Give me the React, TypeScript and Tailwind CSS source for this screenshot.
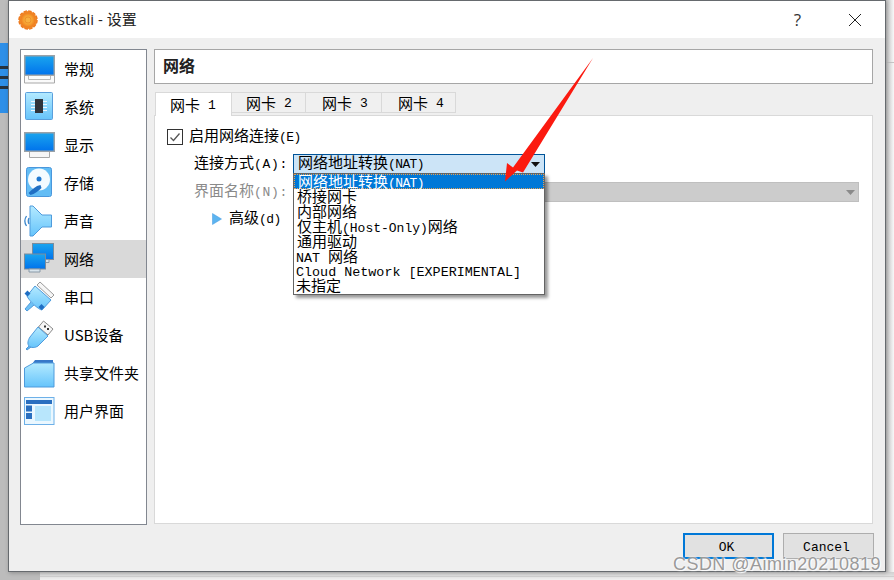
import React from "react";

const cjk = "font-['Liberation_Mono','Noto_Sans_CJK_SC',monospace]";

function Defs() {
  return (
    <svg width="0" height="0" className="absolute">
      <defs>
        <linearGradient id="blu" x1="0" y1="0" x2="0" y2="1">
          <stop offset="0" stopColor="#1aa5ee" />
          <stop offset="1" stopColor="#0072ec" />
        </linearGradient>
        <linearGradient id="lb" x1="0" y1="0" x2="0" y2="1">
          <stop offset="0" stopColor="#b4eaff" />
          <stop offset="1" stopColor="#66c4fb" />
        </linearGradient>
        <radialGradient id="flw">
          <stop offset="0" stopColor="#f9c94c" />
          <stop offset="0.6" stopColor="#f5a030" />
          <stop offset="1" stopColor="#ee7a1e" />
        </radialGradient>
      </defs>
    </svg>
  );
}

function Monitor({ wide }: { wide?: boolean }) {
  if (wide) {
    return (
      <svg width="31" height="30" viewBox="0 0 31 30" className="block">
        <path d="M5.500 21.500h20v6h-20z" fill="#f6f6f6" stroke="#a8a8a8" />
        <rect x="0.750" y="2.750" width="29.500" height="18.500" fill="url(#blu)" stroke="#9aa2a8" strokeWidth="1.500" />
      </svg>
    );
  }
  return (
    <svg width="31" height="30" viewBox="0 0 31 30" className="block">
      <rect x="0.750" y="1.750" width="29.500" height="19.500" fill="url(#blu)" stroke="#9aa2a8" strokeWidth="1.500" />
      <path d="M0.500 21.500h30v7.500h-30z" fill="#fafafa" stroke="#a8a8a8" />
      <path d="M4.500 22v3.500h22V22" fill="none" stroke="#b8b8b8" />
    </svg>
  );
}

function Chip() {
  return (
    <svg width="31" height="30" viewBox="0 0 31 30" className="block">
      <rect x="1.500" y="0.500" width="27" height="27" rx="1" fill="url(#lb)" stroke="#5a9fdc" />
      <rect x="11" y="7" width="8" height="14" fill="#30343c" />
      <path d="M7 9.500h4M7 12.500h4M7 15.500h4M7 18.500h4M19 9.500h4M19 12.500h4M19 15.500h4M19 18.500h4" stroke="#f0f8ff" strokeWidth="1" />
    </svg>
  );
}

function Disk() {
  return (
    <svg width="31" height="32" viewBox="0 0 31 32" className="block">
      <rect x="2.500" y="0.500" width="25" height="29" rx="2" fill="#63bdf5" stroke="#4a97dc" />
      <circle cx="15" cy="12.500" r="11" fill="#f4fbff" />
      <circle cx="15" cy="12" r="2.500" fill="#1f78d0" />
      <path d="M4.500 26c4-4 7-7 12-8l1 3c-3 3-7 6-11 7z" fill="#1f6fc4" />
    </svg>
  );
}

function Speaker() {
  return (
    <svg width="31" height="32" viewBox="0 0 31 32" className="block">
      <path d="M6 1h3l9 9h9.500v12H18l-9 9H6z" fill="url(#lb)" stroke="#4f9bdc" />
      <path d="M2.500 11c-2 3-2 7 0 10M5 13c-1 2-1 4 0 6" fill="none" stroke="#3a86cc" strokeWidth="1.300" />
    </svg>
  );
}

function Net() {
  return (
    <svg width="31" height="32" viewBox="0 0 31 32" className="block">
      <rect x="8.500" y="0.500" width="21" height="16" fill="url(#blu)" stroke="#7b8c9c" />
      <path d="M15 16.500h10v3H15z" fill="#d8e4ec" stroke="#8a9aa8" />
      <rect x="0.500" y="11" width="21" height="15" fill="url(#blu)" stroke="#7b8c9c" />
      <path d="M5 26h11v3H5z" fill="#d8e4ec" stroke="#8a9aa8" />
    </svg>
  );
}

function Serial() {
  return (
    <svg width="31" height="32" viewBox="0 0 31 32" className="block">
      <path d="M16 1l14 13-3 3L13 4z" fill="#f6f6f6" stroke="#9a9a9a" />
      <path d="M11 5l16 14-9 10c-3 0-13-9-15-14z" fill="url(#lb)" stroke="#4f9bdc" />
      <path d="M0.500 12.500l3-3 3 3-3 3zM14.500 26l3-3 3 3-3 3z" fill="#1f6fc4" />
      <path d="M7 21l-6 7 2 2 7-6" fill="#6cc0f5" stroke="#4f9bdc" />
    </svg>
  );
}

function Usb() {
  return (
    <svg width="31" height="31" viewBox="0 0 31 31" className="block">
      <path d="M19.500 1l9.500 8-5 6-9.500-8z" fill="#f6f6f6" stroke="#8a8a8a" />
      <rect x="20" y="5.500" width="2" height="2" fill="#333" />
      <rect x="23" y="8" width="2" height="2" fill="#333" />
      <path d="M14 7l10 9-10 10c-3 2-7 2-9 0s-1-6 1-9z" fill="url(#lb)" stroke="#4f9bdc" />
      <path d="M5 26l-3 3 1 1 4-3" fill="#5cb2f0" stroke="#4f9bdc" />
    </svg>
  );
}

function Folder() {
  return (
    <svg width="31" height="29" viewBox="0 0 31 29" className="block">
      <path d="M11 1h18v8H5z" fill="#3778c8" />
      <path d="M0.500 9l9-5h20.500v24H0.500z" fill="url(#lb)" stroke="#4f9bdc" />
    </svg>
  );
}

function Ui() {
  return (
    <svg width="31" height="29" viewBox="0 0 31 29" className="block">
      <rect x="0.500" y="0.500" width="29.500" height="27" fill="#eaf7ff" stroke="#6db0e8" />
      <rect x="2" y="3" width="26" height="4" fill="#2a6fc0" />
      <rect x="2" y="8.500" width="6" height="6" fill="#2a6fc0" />
      <rect x="2" y="16" width="6" height="6" fill="#2a6fc0" />
      <rect x="11" y="9" width="16" height="15" fill="#b8e6fc" />
    </svg>
  );
}

const items: [string, React.ReactNode][] = [
  ["常规", <Monitor />],
  ["系统", <Chip />],
  ["显示", <Monitor wide />],
  ["存储", <Disk />],
  ["声音", <Speaker />],
  ["网络", <Net />],
  ["串口", <Serial />],
  ["USB设备", <Usb />],
  ["共享文件夹", <Folder />],
  ["用户界面", <Ui />],
];

function L({ children, s = "text-[13px] tracking-[-0.6px]" }: { children: React.ReactNode; s?: string }) {
  return <span className={`${s} font-['Liberation_Mono',monospace]`}>{children}</span>;
}

function Tab({ label, w, active }: { label: string; w: string; active?: boolean }) {
  return (
    <div
      className={`flex items-center border border-[#d9d9d9] pb-px ${w} ${
        active ? "relative z-10 -mb-px h-[24px] border-b-0 bg-white" : "h-[21px] border-l-0 bg-[#f0f0f0]"
      } text-[15px] leading-none text-black font-['Noto_Sans_CJK_SC',sans-serif]`}
    >
      网卡<span className="ml-2 translate-y-px text-[13px] font-['Liberation_Mono',monospace]">{label}</span>
    </div>
  );
}

function Row({ children, cls = "" }: { children: React.ReactNode; cls?: string }) {
  return (
    <div className={`flex items-center whitespace-nowrap pl-[3px] text-[15px] leading-[15px] ${cls}`}>
      {children}
    </div>
  );
}

export default function App() {
  return (
    <div className="relative h-[580px] w-[894px] overflow-hidden bg-[#f4f4f4] font-['Noto_Sans_CJK_SC',sans-serif]">
      <Defs />
      {/* desktop behind the dialog */}
      <div className="absolute left-0 top-0 h-full w-[40px] bg-[#bcbcbc]" />
      <div className="absolute left-0 top-[43px] flex h-[70px] w-[8px] flex-col gap-[7px] bg-[#2e8fe8] pt-[23px]">
        <div className="h-[3px] bg-[#27323e]" />
        <div className="h-[3px] bg-[#27323e]" />
        <div className="h-[3px] bg-[#27323e]" />
      </div>
      <div className="absolute left-[885px] top-0 h-full w-[9px] bg-gradient-to-r from-[#bdbdbd] to-[#f8f8f8]" />
      <div className="absolute left-[885px] top-[62px] h-px w-[9px] bg-[#c4c4c4]" />
      <div className="absolute bottom-0 left-[40px] right-0 h-[8px] bg-gradient-to-b from-[#d0d0d0] to-[#f0f0f0]" />
      <div className="absolute bottom-[3px] left-[40px] right-0 h-px bg-[#cfcfcf]" />

      {/* dialog */}
      <div className="absolute left-[8px] top-0 flex h-[572px] w-[878px] flex-col border border-[#666a6e] bg-[#efefef] shadow-[1px_1px_4px_rgba(0,0,0,0.25)]">
        <div className="flex h-[37px] items-center bg-white pl-[9px]">
          <svg width="20" height="20" viewBox="0 0 20 20">
            <circle cx="10" cy="10" r="9" fill="#f08a28" stroke="#ee7a1e" strokeWidth="1.500" strokeDasharray="3.500 1.200" />
            <circle cx="10" cy="10" r="7.500" fill="url(#flw)" />
            <circle cx="10" cy="10" r="3" fill="#f7b040" stroke="#ea8a2a" strokeWidth="0.800" />
          </svg>
          <span className="ml-[6px] text-[15px] text-[#222] font-['Open_Sans','Noto_Sans_CJK_SC',sans-serif]">testkali - 设置</span>
          <span className="ml-auto mr-[47px] text-[17px] text-[#333] font-['Open_Sans',sans-serif]">?</span>
          <svg className="mr-[23px]" width="14" height="14" viewBox="0 0 14 14">
            <path d="M1 1l12 12M13 1L1 13" stroke="#222" strokeWidth="1" />
          </svg>
        </div>

        <div className="flex flex-1 gap-[7px] px-[11px] pt-[11px]">
          <div className="flex h-[476px] w-[127px] flex-col border border-[#828790] bg-white">
            {items.map(([t, icon]) => (
              <div key={t} className={`flex h-[38px] shrink-0 items-center ${t === "网络" ? "bg-[#d9d9d9]" : ""}`}>
                <div className="flex w-[43px] justify-start pl-[3px]">{icon}</div>
                <span className="whitespace-nowrap pb-px text-[15px] leading-none text-black">{t}</span>
              </div>
            ))}
          </div>

          <div className="flex w-[719px] flex-col">
            <div className="flex h-[35px] items-center border border-[#a6a6a6] bg-white pb-[3px] pl-[8px] text-[16px] font-bold text-[#222]">
              网络
            </div>
            <div className="mt-[8px] flex pl-px">
              <Tab label="1" active w="w-[77px] pl-[14px]" />
              <Tab label="2" w="w-[74px] pl-[14px]" />
              <Tab label="3" w="w-[76px] pl-[16px]" />
              <Tab label="4" w="w-[74px] pl-[16px]" />
            </div>
            <div className={`relative flex h-[409px] flex-col border border-[#d9d9d9] bg-white text-[15px] text-black ${cjk}`}>
              <div className="ml-[12px] mt-[12px] flex h-[17px] items-center">
                <div className="flex size-[16px] items-center justify-center border border-[#333] bg-white">
                  <svg width="12" height="12" viewBox="0 0 12 12">
                    <path d="M1.500 6.500L4.500 9.500L10.500 2.500" fill="none" stroke="#555" strokeWidth="1.300" />
                  </svg>
                </div>
                <span className="ml-[6px] pt-[2px] leading-none">启用网络连接<L>(E)</L></span>
              </div>
              <div className="ml-[39px] mt-[9px] flex h-[20px] items-center">
                <span className="w-[99px] whitespace-nowrap leading-none">连接方式<L s="text-[13px] tracking-[0.7px]">(A):</L></span>
                <div className="flex h-[20px] w-[252px] items-center border border-[#005499] bg-[#cce4f7] pl-[4px] leading-none">
                  网络地址转换<L>(NAT)</L>
                  <svg className="ml-auto mr-[4px]" width="9" height="5" viewBox="0 0 9 5"><path d="M0 0h9L4.500 5z" fill="#111" /></svg>
                </div>
              </div>
              <div className="ml-[39px] mt-[8px] flex h-[20px] items-center text-[#8a8a8a]">
                <span className="w-[99px] whitespace-nowrap leading-none">界面名称<L s="text-[13px] tracking-[0.7px]">(N):</L></span>
                <div className="flex h-[20px] w-[566px] items-center border border-[#bfbfbf] bg-[#cccccc]">
                  <svg className="ml-auto mr-[3px]" width="9" height="5" viewBox="0 0 9 5"><path d="M0 0h9L4.500 5z" fill="#8a8a8a" /></svg>
                </div>
              </div>
              <div className="ml-[57px] mt-[7px] flex h-[20px] items-center leading-none">
                <svg width="10" height="12" viewBox="0 0 10 12"><path d="M0.500 0.500L9.500 6L0.500 11.500z" fill="#5cb4f0" stroke="#3f96e0" strokeWidth="0.500" /></svg>
                <span className="ml-[7px]">高级<L>(d)</L></span>
              </div>

              {/* open dropdown */}
              <div className="absolute left-[138px] top-[57px] z-20 w-[252px] border border-[#646464] bg-white leading-none text-black shadow-[3px_3px_3px_rgba(0,0,0,0.4)]">
                <Row cls="mb-[2px] h-[15px] border border-dotted border-[#e8a050] bg-[#0078d7] pt-[3px] text-white">网络地址转换<L>(NAT)</L></Row>
                <Row cls="h-[15px]">桥接网卡</Row>
                <Row cls="h-[15px]">内部网络</Row>
                <Row cls="h-[15px]">仅主机<L s="text-[13px]">(Host-Only)</L>网络</Row>
                <Row cls="h-[15px]">通用驱动</Row>
                <Row cls="h-[14px] !pl-[2px]"><L s="text-[13.4px]">NAT</L><span className="ml-[8px]">网络</span></Row>
                <Row cls="h-[15px] !pl-[2px]"><L s="text-[13.4px]">Cloud Network [EXPERIMENTAL]</L></Row>
                <Row cls="h-[14px] !pl-[2px]">未指定</Row>
              </div>
            </div>
          </div>
        </div>

        <div className="flex justify-end gap-[9px] pb-[12px] pr-[11px]">
          <div className="flex h-[26px] w-[91px] items-center justify-center border-2 border-[#0078d7] bg-[#e1e1e1] pr-[4px] pt-[4px] text-[13px] text-black font-['Liberation_Mono',monospace]">OK</div>
          <div className="flex h-[26px] w-[91px] items-center justify-center border border-[#adadad] bg-[#e1e1e1] pr-[4px] pt-[4px] text-[13px] text-black font-['Liberation_Mono',monospace]">Cancel</div>
        </div>
      </div>

      {/* annotation arrow */}
      <svg className="pointer-events-none absolute left-0 top-0 z-30" width="894" height="580" viewBox="0 0 894 580">
        <path d="M593 58L523 172.500L517 170.500L505 181.500L507 163L513 167.500z" fill="#fb1a10" />
      </svg>
      {/* watermark */}
      <div className="absolute left-[673px] top-[554px] z-30 whitespace-nowrap text-[18px] leading-[20px] tracking-[0.45px] text-[#9a9a9a] font-['Liberation_Sans',sans-serif] [text-shadow:0_0_2px_#fff,1px_1px_1px_#fff]">
        CSDN @Aimin20210819
      </div>
    </div>
  );
}
